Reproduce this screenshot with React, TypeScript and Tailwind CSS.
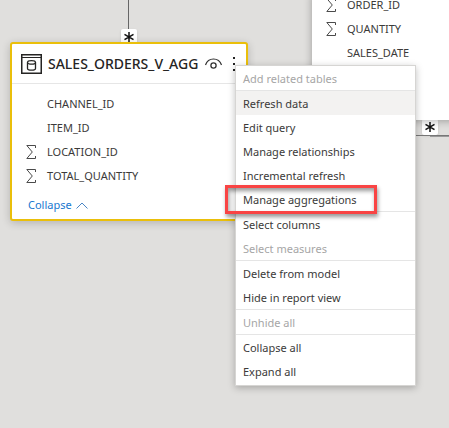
import React from 'react';

type Field = { name: string; numeric?: boolean };

const aggFields: Field[] = [
  { name: 'CHANNEL_ID' },
  { name: 'ITEM_ID' },
  { name: 'LOCATION_ID', numeric: true },
  { name: 'TOTAL_QUANTITY', numeric: true },
];

const orderFields: Field[] = [
  { name: 'ORDER_ID', numeric: true },
  { name: 'QUANTITY', numeric: true },
  { name: 'SALES_DATE' },
];

type MenuEntry = { label: string; disabled?: boolean; active?: boolean; marked?: boolean };

const menuGroups: MenuEntry[][] = [
  [{ label: 'Add related tables', disabled: true }],
  [
    { label: 'Refresh data', active: true },
    { label: 'Edit query' },
    { label: 'Manage relationships' },
    { label: 'Incremental refresh' },
    { label: 'Manage aggregations', marked: true },
  ],
  [{ label: 'Select columns' }, { label: 'Select measures', disabled: true }],
  [{ label: 'Delete from model' }, { label: 'Hide in report view' }],
  [{ label: 'Unhide all', disabled: true }],
  [{ label: 'Collapse all' }, { label: 'Expand all' }],
];

function Sigma() {
  return (
    <svg width="11" height="14" viewBox="0 0 11 14" fill="none" stroke="#4a4a4a" aria-hidden="true">
      <path d="M9.5 3V.5H.8L6.3 7 .8 13.500h8.700V11" />
    </svg>
  );
}

function TableIcon() {
  return (
    <svg width="21" height="20" viewBox="0 0 21 20" fill="none" stroke="#252423" aria-hidden="true">
      <path d="M.75 .75h19.5v18.5H.75z" strokeWidth="1.5" />
      <path d="M1 3.500h19" />
      <ellipse cx="10.5" cy="8.4" rx="4" ry="1.8" strokeWidth="1.3" />
      <path d="M6.5 8.4v6c0 1 1.8 1.8 4 1.8s4-.8 4-1.8v-6" strokeWidth="1.3" />
    </svg>
  );
}

function EyeIcon() {
  return (
    <svg width="17" height="12" viewBox="0 0 17 12" fill="none" stroke="#333" aria-hidden="true">
      <path d="M.5 7C1.8 3 4.8 1 8.5 1s6.700 2 8 6" strokeWidth="1.2" />
      <circle cx="8.500" cy="7.500" r="2.600" strokeWidth="1.3" />
    </svg>
  );
}

function FieldList({ fields }: { fields: Field[] }) {
  return (
    <ul>
      {fields.map((field) => (
        <li key={field.name} className="flex h-6 items-center pl-3.5 text-[11px] text-[#3b3a39]">
          <span className="w-[21px] shrink-0">{field.numeric && <Sigma />}</span>
          {field.name}
        </li>
      ))}
    </ul>
  );
}

function ManyMarker() {
  return (
    <div className="flex h-4 w-4 justify-center rounded-[2px] bg-white shadow-sm">
      <svg width="12" height="16" viewBox="0 0 12 16" stroke="#111" strokeWidth="1.5" aria-hidden="true">
        <path d="M6 3v10M1.500 5.300l9 5.400M10.500 5.300l-9 5.400" />
      </svg>
    </div>
  );
}

export default function App() {
  return (
    <main className="relative h-screen overflow-hidden bg-[#e0dfdd] font-['Noto_Sans','Open_Sans',sans-serif]">
      <div className="absolute left-[121px] top-0 flex flex-col">
        <div className="ml-[7px] h-[29px] w-px bg-[#666]" />
        <ManyMarker />
      </div>

      <div className="absolute left-[415px] right-0 top-[119px] flex flex-col">
        <div className="pl-[7px]">
          <ManyMarker />
        </div>
        <div className="h-px bg-[#777]" />
        <div className="ml-[15px] h-px bg-[#999]" />
      </div>

      <section className="absolute -top-[7px] left-[312px] w-[240px] bg-white pb-[55px] shadow-[0_1px_8px_rgba(0,0,0,0.3)]">
        <FieldList fields={orderFields} />
      </section>

      <section className="absolute left-[10px] top-[42px] w-[238px] rounded-[3px] border-2 border-[#eabf0a] bg-white shadow-[0_2px_8px_rgba(0,0,0,0.2)]">
        <header className="flex h-10 items-center border-b border-[#e6e6e6] pl-[9px] pr-[11px]">
          <TableIcon />
          <h2 className="ml-1.5 flex-1 whitespace-nowrap text-sm font-medium text-[#252423]">SALES_ORDERS_V_AGG</h2>
          <button type="button" aria-label="Toggle visibility" className="mr-[11px]">
            <EyeIcon />
          </button>
          <button type="button" aria-label="More options" className="flex flex-col gap-1">
            <span className="h-0.5 w-0.5 bg-[#222]" />
            <span className="h-0.5 w-0.5 bg-[#222]" />
            <span className="h-0.5 w-0.5 bg-[#222]" />
          </button>
        </header>
        <div className="pt-2">
          <FieldList fields={aggFields} />
        </div>
        <button type="button" className="flex h-[31px] items-center gap-1 pl-4 pt-1 text-[11px] text-[#1878cf]">
          Collapse
          <svg width="12" height="7" viewBox="0 0 12 7" fill="none" stroke="#4a86c5" aria-hidden="true">
            <path d="M.5 6.500 6 1l5.500 5.500" />
          </svg>
        </button>
      </section>

      <div
        role="menu"
        className="absolute left-[235px] top-[65px] w-[181px] divide-y divide-[#e5e5e5] border border-[#d6d5d3] bg-white pb-0.5 text-[11px] text-[#3b3a39] shadow-[0_2px_7px_rgba(0,0,0,0.25)]"
      >
        {menuGroups.map((group) => (
          <div key={group[0].label} role="group">
            {group.map((entry) => (
              <div key={entry.label} className="relative">
                <button
                  type="button"
                  role="menuitem"
                  disabled={entry.disabled}
                  className={`flex h-6 w-full items-center pl-[7px] pt-0.5 ${entry.disabled ? 'text-[#a6a6a6]' : ''} ${entry.active ? 'bg-[#f3f2f1]' : ''}`}
                >
                  {entry.label}
                </button>
                {entry.marked && (
                  <div className="pointer-events-none absolute -left-[11px] -top-0.5 h-[29px] w-[152px] border-3 border-[#f94444] shadow-[1px_3px_4px_rgba(0,0,0,0.4),inset_1px_3px_4px_rgba(0,0,0,0.4)]" />
                )}
              </div>
            ))}
          </div>
        ))}
      </div>
    </main>
  );
}
